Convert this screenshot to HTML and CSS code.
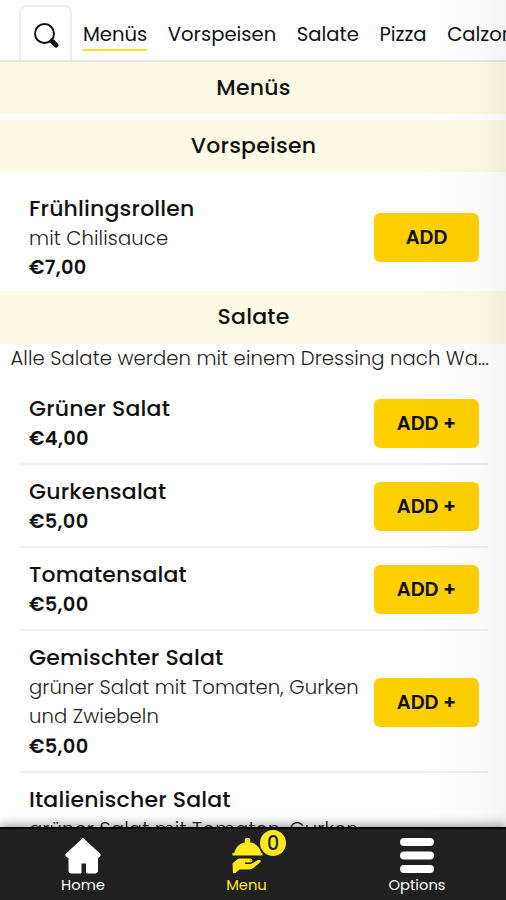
FILE: index.html
```html
<!DOCTYPE html>
<html lang="de">
<head>
<meta charset="utf-8">
<title>Speisekarte</title>
<link rel="stylesheet" href="styles.css">
</head>
<body>
<div class="app">
  <header class="topbar">
    <button class="search" aria-label="Suche">
      <svg width="28" height="28" viewBox="0 0 28 28"><circle cx="12.500" cy="11.500" r="9.500" fill="none" stroke="#111" stroke-width="2"/><path d="M18.500 17.500 L20 19" stroke="#111" stroke-width="2.500"/><path d="M20.300 19.500 L24 23" stroke="#111" stroke-width="5" stroke-linecap="round"/></svg>
    </button>
    <nav class="tabs">
      <a class="tab active">Menüs</a>
      <a class="tab">Vorspeisen</a>
      <a class="tab">Salate</a>
      <a class="tab">Pizza</a>
      <a class="tab">Calzone</a>
    </nav>
  </header>
  <main class="menu">
    <h2 class="band first">Menüs</h2>
    <h2 class="band">Vorspeisen</h2>
    <section class="items single">
      <article class="item"><div class="info"><h3>Frühlingsrollen</h3><p>mit Chilisauce</p><strong>€7,00</strong></div><button class="add">ADD</button></article>
    </section>
    <h2 class="band salate">Salate</h2>
    <p class="note">Alle Salate werden mit einem Dressing nach Wa...</p>
    <section class="items">
      <article class="item"><div class="info"><h3>Grüner Salat</h3><strong>€4,00</strong></div><button class="add">ADD +</button></article>
      <article class="item"><div class="info"><h3>Gurkensalat</h3><strong>€5,00</strong></div><button class="add">ADD +</button></article>
      <article class="item"><div class="info"><h3>Tomatensalat</h3><strong>€5,00</strong></div><button class="add">ADD +</button></article>
      <article class="item"><div class="info"><h3>Gemischter Salat</h3><p>grüner Salat mit Tomaten, Gurken<br>und Zwiebeln</p><strong>€5,00</strong></div><button class="add">ADD +</button></article>
      <article class="item"><div class="info"><h3>Italienischer Salat</h3><p>grüner Salat mit Tomaten, Gurken</p></div></article>
    </section>
  </main>
  <div class="edge-shade"></div>
  <footer class="bottombar">
    <a class="dest">
      <svg width="38" height="37" viewBox="0 0 38 37"><path d="M19 1.500 L36 17 Q37 20 33.500 20.500 V34 Q33.500 36 31.500 36 H22.500 V26 H17 V36 H7 Q5 36 5 34 V20.500 Q1 20 2 17 Z" fill="#fff" stroke="#fff" stroke-linejoin="round"/></svg>
      <span>Home</span>
    </a>
    <a class="dest current">
      <svg width="34" height="37" viewBox="0 0 34 37"><g fill="#ffe81c"><circle cx="17.500" cy="3.500" r="2.800"/><path d="M4 16.500 C6 9 11 5 17.500 5 S29.500 9 31.500 16.500 Z"/><path d="M2.500 16 H32.500 V18.500 H2.500 Z"/><path d="M2.500 26.500 L7 22.500 Q8 21.500 10 21.500 H20.500 Q23 22 22.500 24 Q22 25.500 20 25.500 H15 V27 H21 L28 23 Q31.500 22.500 30.500 25 L23.500 31 Q21.500 32.500 19 32.500 H9.500 L5.500 36 H3 Z"/></g></svg>
      <span>Menu</span>
      <b class="badge">0</b>
    </a>
    <a class="dest">
      <svg width="36" height="37" viewBox="0 0 36 37"><path d="M5 5 H31 M5 18.500 H31 M5 32 H31" stroke="#fff" stroke-width="8" stroke-linecap="round"/></svg>
      <span>Options</span>
    </a>
  </footer>
</div>
</body>
</html>
```
FILE: styles.css
```css
* { box-sizing: border-box; }
body { margin: 0; }
h2, h3, p { margin: 0; font-weight: inherit; font-size: inherit; }
button { font: inherit; border: 0; padding: 0; color: inherit; }
.app {
  position: relative;
  width: 506px;
  height: 900px;
  overflow: hidden;
  display: flex;
  flex-direction: column;
  background: #fff;
  color: #111;
  font-family: Poppins, Inter, sans-serif;
}
.topbar {
  flex: none;
  height: 62px;
  display: flex;
  align-items: flex-end;
  padding-left: 19px;
  border-bottom: 2px solid #e6e6e6;
}
.search {
  flex: none;
  width: 53px;
  height: 55px;
  margin-right: 11px;
  padding-top: 5px;
  display: grid;
  place-items: center;
  background: #fff;
  border: 2px solid #eee;
  border-bottom: 0;
  border-radius: 7px 7px 0 0;
}
.tabs { display: flex; gap: 20.5px; height: 60px; padding-top: 20px; }
.tab { height: 31px; line-height: 28px; font-size: 19.6px; white-space: nowrap; }
.tab.active { border-bottom: 2px solid #fce22a; }
.menu { flex: 1; min-height: 0; overflow: hidden; }
.band {
  height: 52px;
  padding-left: 1px;
  line-height: 51px;
  text-align: center;
  font-size: 22px;
  font-weight: 500;
  letter-spacing: .2px;
  background: #fdfbe5;
}
.band.first { margin-bottom: 6px; }
.band.salate { height: 53px; line-height: 52px; }
.items { padding: 0 18px 0 20px; }
.item {
  display: flex;
  justify-content: space-between;
  align-items: center;
  min-height: 83px;
  padding: 12px 9px 10px;
  border-bottom: 2px solid #efefef;
}
.single .item { height: 119px; padding-top: 24px; border: 0; }
.single .add { margin-top: -3px; }
.info { line-height: 29.5px; }
.info h3 { font-size: 22px; font-weight: 500; letter-spacing: .18px; }
.info p { font-size: 19.6px; font-weight: 300; letter-spacing: .11px; color: #222; white-space: nowrap; }
.info strong { display: block; font-size: 19.4px; font-weight: 600; letter-spacing: .3px; }
.add {
  flex: none;
  width: 105px;
  height: 49px;
  border-radius: 6px;
  background: #ffd000;
  font-size: 19.4px;
  font-weight: 600;
}
.note {
  height: 38.4px;
  padding-left: 10.5px;
  line-height: 29px;
  font-size: 19.6px;
  font-weight: 300;
  letter-spacing: .08px;
  white-space: nowrap;
  color: #222;
}
.edge-shade {
  position: absolute;
  inset: 0 0 72px auto;
  width: 90px;
  background: linear-gradient(to right, transparent, rgba(0,0,0,.015) 70%, rgba(0,0,0,.05));
}
.bottombar {
  position: relative;
  flex: none;
  height: 73px;
  display: grid;
  grid-template-columns: 166px 161px 180px;
  background: #202020;
  border-top: 2px solid #080808;
  box-shadow: 0 -2px 10px rgba(0,0,0,.4);
  color: #fff;
}
.dest {
  position: relative;
  display: flex;
  flex-direction: column;
  align-items: center;
  padding-top: 8px;
  font-size: 14.7px;
  line-height: 22px;
}
.current { color: #ffe81c; }
.badge {
  position: absolute;
  left: 94px;
  top: 1px;
  width: 26px;
  height: 26px;
  border-radius: 50%;
  background: #ffe81c;
  color: #202020;
  text-align: center;
  line-height: 27px;
  font-size: 19px;
  font-weight: 500;
}
```
